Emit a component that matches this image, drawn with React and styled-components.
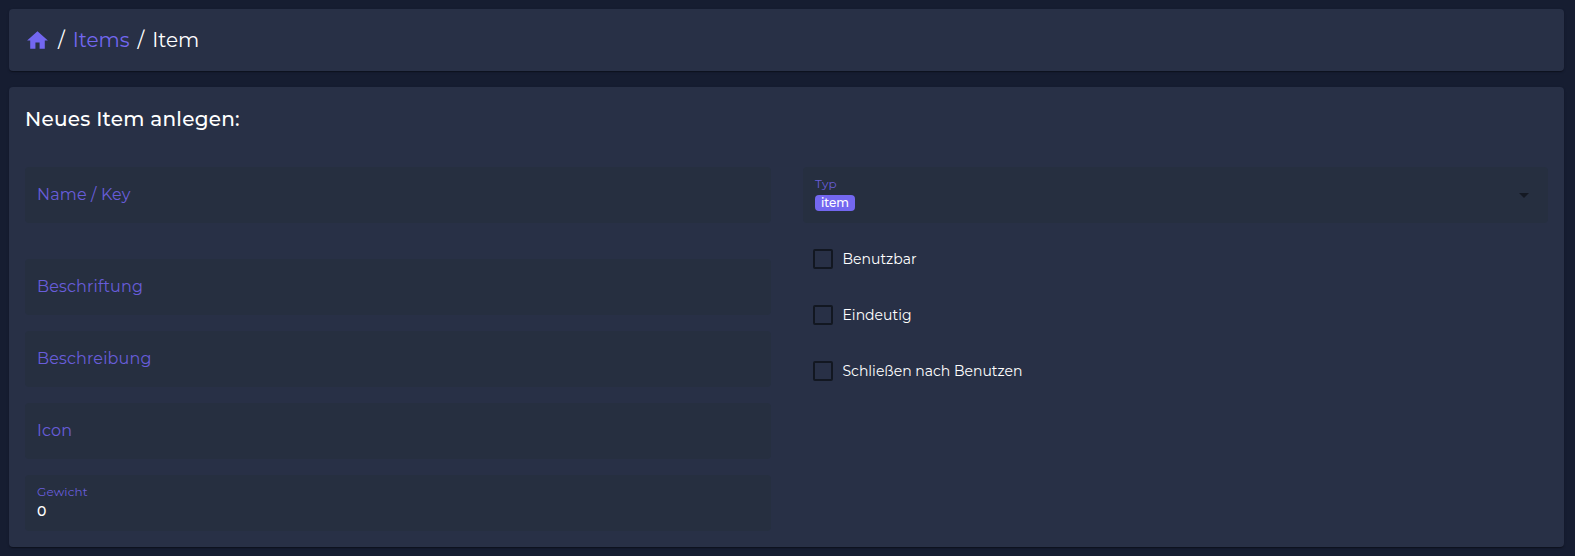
import React from "react";
import styled, { createGlobalStyle } from "styled-components";

const GlobalStyle = createGlobalStyle`
  * { box-sizing: border-box; }
  body {
    margin: 0;
    background: #161d31;
    color: #fff;
    font-family: Montserrat, Inter, "Liberation Sans", sans-serif;
  }
`;

const Page = styled.main`
  height: 556px;
  padding: 9px 11px 9px 9px;
  display: flex;
  flex-direction: column;
  gap: 16px;
`;

const Card = styled.section`
  background: #283046;
  border-radius: 4px;
  padding: 0 16px;
  box-shadow: 0 2px 1px -1px rgba(0, 0, 0, 0.2), 0 1px 1px rgba(0, 0, 0, 0.14),
    0 1px 3px rgba(0, 0, 0, 0.12);
`;

const Breadcrumb = styled(Card)`
  flex: none;
  height: 62px;
  display: flex;
  align-items: center;
  font-size: 20px;
  line-height: 24px;
  word-spacing: 2.75px;
  white-space: pre;
`;

const HomeIcon = styled.svg`
  width: 25px;
  height: 25px;
  fill: #7367f0;
`;

const Crumb = styled.span`
  color: ${(p) => (p.$link ? "#7367f0" : "#fff")};
`;

const FormCard = styled(Card)`
  flex: none;
  height: 460px;
`;

const Title = styled.h1`
  margin: 0;
  padding-top: 20px;
  height: 80px;
  font-size: 20px;
  line-height: 24px;
  font-weight: 500;
  letter-spacing: 0.25px;
`;

const Columns = styled.div`
  display: grid;
  grid-template-columns: 746px 745px;
  gap: 32px;
`;

const Column = styled.div`
  display: flex;
  flex-direction: column;
`;

const Field = styled.div`
  position: relative;
  height: 56px;
  margin-bottom: ${(p) => p.$gap ?? 16}px;
  padding: 0 12px;
  border-radius: 4px;
  background: #262f40;
  display: flex;
  flex-direction: column;
  justify-content: ${(p) => (p.$filled ? "flex-start" : "center")};
`;

const Label = styled.span`
  color: #685dda;
  font-size: ${(p) => (p.$small ? 12 : 16)}px;
  line-height: ${(p) => (p.$small ? 16 : 20)}px;
  margin-top: ${(p) => (p.$small ? 9 : 0)}px;
  letter-spacing: 0.0094em;
`;

const Value = styled.span`
  font-size: 14px;
  font-weight: 500;
  line-height: 20px;
  margin-top: 1px;
`;

const Chip = styled.span`
  align-self: flex-start;
  width: 40px;
  height: 16px;
  margin-top: 3px;
  border-radius: 4px;
  background: #7367f0;
  font-size: 12px;
  font-weight: 500;
  line-height: 15px;
  text-align: center;
`;

const Arrow = styled.span`
  position: absolute;
  right: 19px;
  top: 26px;
  border: 5px solid transparent;
  border-top-color: #141923;
  border-bottom: 0;
`;

const CheckRow = styled.label`
  display: flex;
  align-items: center;
  height: 56px;
  padding-left: 10px;
  gap: 9.5px;
  font-size: 14px;
  line-height: 20px;
`;

const Box = styled.span`
  width: 20px;
  height: 20px;
  border: 2px solid #121721;
  border-radius: 2px;
`;

const CHECKS = ["Benutzbar", "Eindeutig", "Schließen nach Benutzen"];

export default function App() {
  return (
    <Page>
      <GlobalStyle />
      <Breadcrumb as="nav">
        <HomeIcon viewBox="0 0 24 24">
          <path d="M10 20v-6h4v6h5v-8h3L12 3 2 12h3v8z" />
        </HomeIcon>
        <Crumb> / </Crumb>
        <Crumb $link>Items</Crumb>
        <Crumb> / </Crumb>
        <Crumb>Item</Crumb>
      </Breadcrumb>
      <FormCard>
        <Title>Neues Item anlegen:</Title>
        <Columns>
          <Column>
            <Field $gap={36}>
              <Label>Name / Key</Label>
            </Field>
            <Field>
              <Label>Beschriftung</Label>
            </Field>
            <Field>
              <Label>Beschreibung</Label>
            </Field>
            <Field>
              <Label>Icon</Label>
            </Field>
            <Field $filled>
              <Label $small>Gewicht</Label>
              <Value>0</Value>
            </Field>
          </Column>
          <Column>
            <Field $filled $gap={8}>
              <Label $small>Typ</Label>
              <Chip>item</Chip>
              <Arrow />
            </Field>
            {CHECKS.map((text) => (
              <CheckRow key={text}>
                <Box />
                {text}
              </CheckRow>
            ))}
          </Column>
        </Columns>
      </FormCard>
    </Page>
  );
}
